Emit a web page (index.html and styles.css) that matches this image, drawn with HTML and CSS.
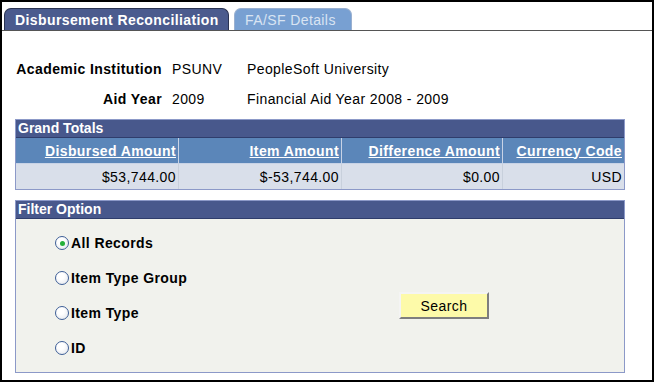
FILE: index.html
```html
<!DOCTYPE html>
<html lang="en">

<head>
    <meta charset="UTF-8">
    <title>Disbursement Reconciliation</title>
    <link rel="stylesheet" href="styles.css">
</head>

<body>
    <div class="frame">
        <div class="tabs">
            <span class="tab active">Disbursement Reconciliation</span>
            <span class="tab">FA/SF Details</span>
        </div>

        <div class="info">
            <span class="label">Academic Institution</span>
            <span>PSUNV</span>
            <span>PeopleSoft University</span>
            <span class="label">Aid Year</span>
            <span>2009</span>
            <span>Financial Aid Year 2008 - 2009</span>
        </div>

        <div class="box totals">
            <div class="box-title">Grand Totals</div>
            <table>
                <thead>
                    <tr>
                        <th class="c1"><a href="#">Disbursed Amount</a></th>
                        <th class="c2"><a href="#">Item Amount</a></th>
                        <th class="c3"><a href="#">Difference Amount</a></th>
                        <th class="c4"><a href="#">Currency Code</a></th>
                    </tr>
                </thead>
                <tbody>
                    <tr>
                        <td>$53,744.00</td>
                        <td>$-53,744.00</td>
                        <td>$0.00</td>
                        <td>USD</td>
                    </tr>
                </tbody>
            </table>
        </div>

        <div class="box filter">
            <div class="box-title">Filter Option</div>
            <div class="filter-body">
                <div class="options">
                    <label class="option"><span class="radio checked"></span>All Records</label>
                    <label class="option"><span class="radio"></span>Item Type Group</label>
                    <label class="option"><span class="radio"></span>Item Type</label>
                    <label class="option"><span class="radio"></span>ID</label>
                </div>
                <div class="actions">
                    <button class="search">Search</button>
                </div>
            </div>
        </div>
    </div>
</body>

</html>
```

FILE: styles.css
```css
body {
    font-family: "Liberation Sans", Arial, sans-serif;
    font-size: 14px;
    letter-spacing: 0.4px;
    color: #000;
    margin: 0;
    padding: 0;
}

.frame {
    box-sizing: border-box;
    width: 654px;
    height: 382px;
    border: 2px solid #000;
}

/* tabs */
.tabs {
    display: flex;
    gap: 5px;
    padding: 6px 0 0 2px;
    border-bottom: 1px solid #555;
}

.tab {
    box-sizing: border-box;
    width: 118px;
    height: 22px;
    padding: 3px 0 0 10px;
    border: 1px solid #9ab0d0;
    border-bottom: none;
    border-radius: 7px 7px 0 0;
    background-color: #78a0d2;
    color: #d9e4f2;
    white-space: nowrap;
}

.tab.active {
    width: 225px;
    border-color: #2a3352;
    background-color: #4b5b8e;
    color: #fff;
    font-weight: bold;
}

/* institution / aid year */
.info {
    display: grid;
    grid-template-columns: 146px 65px auto;
    column-gap: 10px;
    grid-auto-rows: 30px;
    align-items: center;
    padding: 23px 0 0 14px;
    white-space: nowrap;
}

.info .label {
    font-weight: bold;
    text-align: right;
}

/* grouped boxes */
.box {
    box-sizing: border-box;
    width: 610px;
    margin-left: 13px;
    border: 1px solid #8c99c8;
}

.box-title {
    background-color: #48588c;
    color: #fff;
    font-weight: bold;
    letter-spacing: 0;
    height: 17px;
    line-height: 17px;
    padding-left: 2px;
    border-bottom: 1px solid #2f3d6c;
}

.totals {
    margin-top: 5px;
}

.totals table {
    width: 100%;
    border-collapse: collapse;
}

.totals th,
.totals td {
    text-align: right;
    padding: 0 2px;
    white-space: nowrap;
}

.totals th {
    height: 25px;
    background-color: #5b86b9;
    border: 1px solid #c8d3e6;
    border-top: none;
}

.totals th a {
    color: #fff;
    font-weight: bold;
}

.totals td {
    height: 25px;
    background-color: #d9dfea;
    border-left: 1px solid #c8d0dc;
}

.totals td:first-child,
.totals th:first-child {
    border-left: none;
}

.totals th:last-child {
    border-right: none;
}

.c1 { width: 158px; }
.c2 { width: 158px; }
.c3 { width: 156px; }

/* filter */
.filter {
    margin-top: 10px;
    height: 173px;
    background-color: #f1f2ed;
}

.filter-body {
    display: flex;
    padding-left: 39px;
}

.options {
    display: flex;
    flex-direction: column;
    gap: 19px;
    padding-top: 16px;
    width: 344px;
    font-weight: bold;
}

.option {
    display: flex;
    align-items: center;
    height: 16px;
    gap: 2px;
}

.radio {
    box-sizing: border-box;
    width: 14px;
    height: 14px;
    border: 1px solid #3e5f97;
    border-radius: 50%;
    background: radial-gradient(circle at 40% 35%, #fff 30%, #dfe3ea 100%);
    display: flex;
    align-items: center;
    justify-content: center;
}

.radio.checked::after {
    content: "";
    width: 5px;
    height: 5px;
    border-radius: 50%;
    background-color: #25b03a;
}

.actions {
    padding-top: 73px;
}

.search {
    box-sizing: border-box;
    width: 90px;
    height: 27px;
    font-family: "Liberation Sans", Arial, sans-serif;
    font-size: 14px;
    letter-spacing: 0.4px;
    color: #000;
    background-color: #fdfaa9;
    border: 2px solid;
    border-color: #f4f4f4 #7e7e7e #7e7e7e #f4f4f4;
    padding: 0;
}
```
